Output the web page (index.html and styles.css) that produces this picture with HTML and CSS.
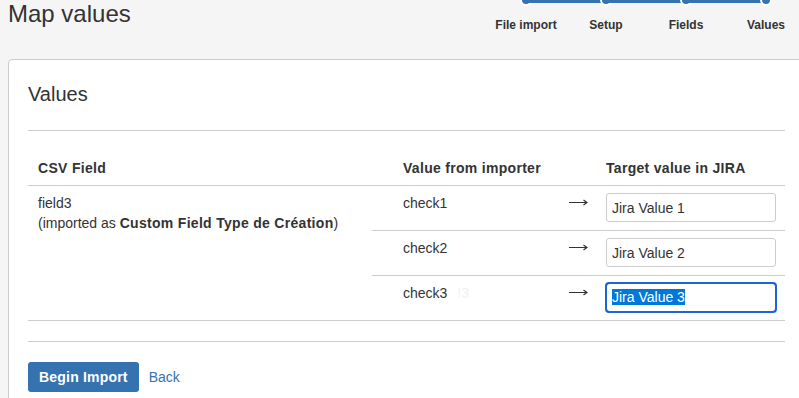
FILE: index.html
```html
<!DOCTYPE html>
<html lang="en">
<head>
  <meta charset="UTF-8">
  <meta name="viewport" content="width=device-width, initial-scale=1.0">
  <title>Map values</title>
  <link rel="stylesheet" href="styles.css">
</head>
<body>

  <header class="page-header">
    <h1>Map values</h1>
    <ol class="progress-tracker">
      <li class="step">File import</li>
      <li class="step">Setup</li>
      <li class="step">Fields</li>
      <li class="step current">Values</li>
    </ol>
  </header>

  <div class="panel">
    <h2>Values</h2>

    <form id="values-form">
      <table class="value-map">
        <thead>
          <tr>
            <th class="col-field">CSV Field</th>
            <th class="col-value" colspan="2">Value from importer</th>
            <th class="col-target">Target value in JIRA</th>
          </tr>
        </thead>
        <tbody>
          <tr>
            <td class="col-field" rowspan="3">
              field3<br>
              (imported as <strong>Custom Field Type de Création</strong>)
            </td>
            <td class="col-value">check1</td>
            <td class="col-arrow">
              <svg class="arrow" width="19" height="7" viewBox="0 0 19 7"><path d="M0 3.5H18M14.5 1L18 3.5L14.5 6" fill="none" stroke="#333" stroke-width="1.2"/></svg>
            </td>
            <td class="col-target"><input type="text" class="field-input" value="Jira Value 1"></td>
          </tr>
          <tr>
            <td class="col-value">check2</td>
            <td class="col-arrow">
              <svg class="arrow" width="19" height="7" viewBox="0 0 19 7"><path d="M0 3.5H18M14.5 1L18 3.5L14.5 6" fill="none" stroke="#333" stroke-width="1.2"/></svg>
            </td>
            <td class="col-target"><input type="text" class="field-input" value="Jira Value 2"></td>
          </tr>
          <tr>
            <td class="col-value">check3 <span class="ghost">ǃ3</span></td>
            <td class="col-arrow">
              <svg class="arrow" width="19" height="7" viewBox="0 0 19 7"><path d="M0 3.5H18M14.5 1L18 3.5L14.5 6" fill="none" stroke="#333" stroke-width="1.2"/></svg>
            </td>
            <td class="col-target">
              <!-- focused field with its text selected -->
              <div class="field-input is-focused"><span class="selected">Jira Value 3</span></div>
            </td>
          </tr>
        </tbody>
      </table>

      <div class="form-actions">
        <button type="submit" class="button-primary">Begin Import</button>
        <a href="#" class="back-link">Back</a>
      </div>
    </form>
  </div>

</body>
</html>
```

FILE: styles.css
```css
body {
  font-family: "Liberation Sans", Arial, sans-serif;
  font-size: 14px;
  line-height: 20px;
  color: #333;
  margin: 0;
  padding: 0;
  background-color: #f5f5f5;
  overflow: hidden;
}

strong, th {
  letter-spacing: 0.3px;
}

.page-header {
  display: flex;
  justify-content: space-between;
  align-items: flex-start;
  padding-left: 8px;
  margin-right: -7px;
}

h1 {
  font-size: 24px;
  font-weight: normal;
  line-height: 28px;
  margin: 0;
}

/* Progress tracker */
.progress-tracker {
  display: flex;
  list-style: none;
  margin: 0;
  padding: 0;
}

.step {
  position: relative;
  width: 80px;
  padding-top: 17px;
  text-align: center;
  font-size: 12px;
  font-weight: bold;
  line-height: 16px;
}

.step::before {
  content: "";
  position: absolute;
  top: -3px;
  left: -40px;
  width: 80px;
  height: 6px;
  background-color: #3572b0;
}

.step:first-child::before {
  display: none;
}

.step::after {
  content: "";
  position: absolute;
  top: -6px;
  left: 50%;
  margin-left: -6px;
  width: 8px;
  height: 8px;
  border: 2px solid #fff;
  border-radius: 50%;
  background-color: #3572b0;
}

/* Panel */
.panel {
  margin: 26px 0 0 8px;
  width: 797px;
  box-sizing: border-box;
  padding: 22px 19px 0;
  background-color: #fff;
  border: 1px solid #ccc;
  border-radius: 4px;
  min-height: 400px;
}

h2 {
  font-size: 20px;
  font-weight: normal;
  line-height: 24px;
  margin: 0;
  padding-bottom: 24px;
  border-bottom: 1px solid #ccc;
}

/* Mapping table */
.value-map {
  width: 100%;
  margin-top: 20px;
  border-collapse: collapse;
}

.value-map th,
.value-map td {
  text-align: left;
  vertical-align: top;
  padding: 7px 10px 8px;
  border-bottom: 1px solid #ccc;
}

.value-map th {
  font-weight: bold;
  padding-bottom: 7px;
}

.col-field {
  width: 324px;
}

.value-map .col-value {
  padding-left: 31px;
  width: 146px;
}

.value-map .col-arrow {
  width: 19px;
  padding-left: 10px;
  padding-right: 8px;
}

.arrow {
  display: block;
  margin-top: 6px;
}

.value-map .col-target {
  width: 170px;
  padding-right: 9px;
}

.ghost {
  color: #eef1f6;
  margin-left: 6px;
}

.field-input {
  display: block;
  width: 170px;
  height: 29px;
  margin: 0;
  padding: 0 5px;
  box-sizing: border-box;
  font-family: inherit;
  font-size: 14px;
  line-height: 27px;
  color: #333;
  border: 1px solid #ccc;
  border-radius: 3px;
  background-color: #fff;
}

.field-input.is-focused {
  outline: 2px solid #1a66d9;
  outline-offset: -1px;
  border-color: #1a66d9;
  border-radius: 3px;
}

.selected {
  background-color: #0078d7;
  color: #fff;
}

/* Actions */
.form-actions {
  display: flex;
  align-items: center;
  gap: 10px;
  margin-top: 20px;
  padding-top: 20px;
  border-top: 1px solid #ccc;
}

.button-primary {
  font-family: inherit;
  font-size: 14px;
  font-weight: bold;
  line-height: 20px;
  letter-spacing: 0.2px;
  padding: 5px 11px;
  background-color: #3572b0;
  color: #fff;
  border: none;
  border-radius: 3px;
  cursor: pointer;
}

.button-primary:hover {
  background-color: #205081;
}

.back-link {
  color: #3572b0;
  text-decoration: none;
}
```
